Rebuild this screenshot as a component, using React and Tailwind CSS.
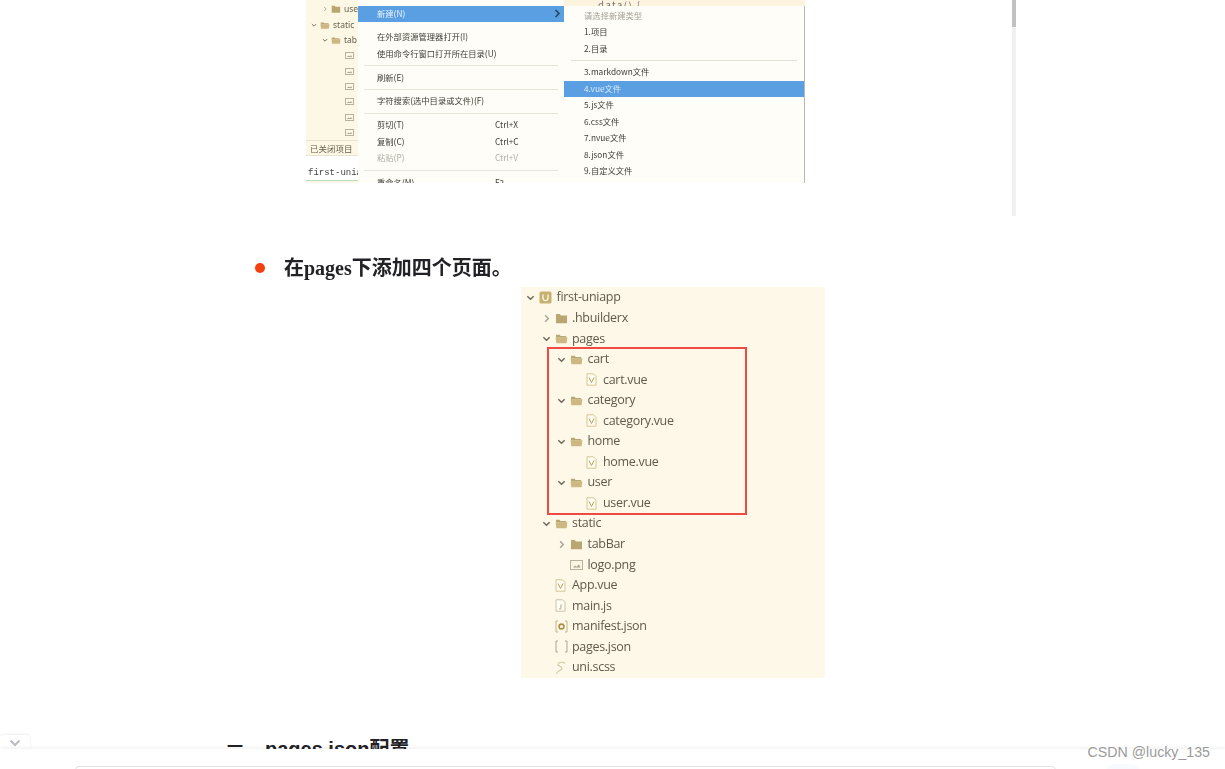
import React from "react";

const Caret = ({ open, className = "" }) => (
  <svg width="9" height="9" viewBox="0 0 10 10" className={className} fill="none" stroke={open ? "#6f6a5c" : "#a8a494"} strokeWidth="1.6">
    {open ? <path d="M1.5 3.5 L5 7 L8.5 3.5" /> : <path d="M3.5 1.5 L7 5 L3.5 8.5" />}
  </svg>
);

const Folder = ({ open, size = 13 }) => (
  <svg width={size} height={size * 0.85} viewBox="0 0 14 12">
    {open ? (
      <>
        <path d="M1 2h4l1 1.2h6V5H1z" fill="#b7a775" />
        <path d="M0.6 4.5h12.8L12.5 11H1.4z" fill="#cdb882" />
      </>
    ) : (
      <path d="M1 1h4.2l1.2 1.6H13V11H1z" fill="#b9a673" />
    )}
  </svg>
);

const FileBase = ({ children, stroke = "#d8c48e" }) => (
  <svg width="11" height="13" viewBox="0 0 11 13" fill="none">
    <path d="M1 .8h6.5L10 3.3v8.9H1z" stroke={stroke} strokeWidth="1" fill="#fffdf4" />
    {children}
  </svg>
);

const TreeIcon = ({ kind }) => {
  if (kind === "project")
    return (
      <svg width="13" height="13" viewBox="0 0 13 13">
        <rect x="0.5" y="0.5" width="12" height="12" rx="1.5" fill="#c8b071" />
        <path d="M4 3.5v3.6a2.5 2.5 0 0 0 5 0V3.5" stroke="#fdf6e3" strokeWidth="1.3" fill="none" />
      </svg>
    );
  if (kind === "open") return <Folder open />;
  if (kind === "closed") return <Folder />;
  if (kind === "vue")
    return (
      <FileBase>
        <path d="M3 4.5l2.5 5 2.5-5" stroke="#b9a15f" strokeWidth="1" />
      </FileBase>
    );
  if (kind === "js")
    return (
      <FileBase stroke="#c9c2aa">
        <path d="M6 5.5v3.6c0 1-1.4 1.1-2 .4" stroke="#a59f89" strokeWidth="1" />
      </FileBase>
    );
  if (kind === "image")
    return (
      <svg width="13" height="10" viewBox="0 0 13 10" fill="none">
        <rect x="0.5" y="0.5" width="12" height="9" stroke="#b8b29c" fill="#fbf5e2" />
        <path d="M3 7.5l2-2 1.5 1.2L9 4.5l1.5 3z" fill="#aaa48c" />
      </svg>
    );
  if (kind === "manifest")
    return (
      <svg width="13" height="13" viewBox="0 0 13 13" fill="none">
        <path d="M3 1H1v11h2M10 1h2v11h-2" stroke="#c7b27c" />
        <circle cx="6.5" cy="6.5" r="2.4" stroke="#ab8f4c" strokeWidth="1.6" />
      </svg>
    );
  if (kind === "bracket")
    return (
      <svg width="13" height="13" viewBox="0 0 13 13" fill="none">
        <path d="M3 1H1v11h2M10 1h2v11h-2" stroke="#a9a695" />
      </svg>
    );
  return (
    <svg width="11" height="14" viewBox="0 0 11 14" fill="none" stroke="#cfc69f" strokeWidth="1.1">
      <path d="M10 2.5C8 .5 3.500 1 3 3.500c-.4 2 4.500 1.500 4 4C6.500 10 2 9 1.500 13" />
    </svg>
  );
};

const treeRows = [
  [0, "open", "project", "first-uniapp"],
  [1, "closed", "closed", ".hbuilderx"],
  [1, "open", "open", "pages"],
  [2, "open", "open", "cart"],
  [3, null, "vue", "cart.vue"],
  [2, "open", "open", "category"],
  [3, null, "vue", "category.vue"],
  [2, "open", "open", "home"],
  [3, null, "vue", "home.vue"],
  [2, "open", "open", "user"],
  [3, null, "vue", "user.vue"],
  [1, "open", "open", "static"],
  [2, "closed", "closed", "tabBar"],
  [2, null, "image", "logo.png"],
  [1, null, "vue", "App.vue"],
  [1, null, "js", "main.js"],
  [1, null, "manifest", "manifest.json"],
  [1, null, "bracket", "pages.json"],
  [1, null, "sass", "uni.scss"],
];

const FileTree = () => (
  <div className="relative w-[304px] h-[391px] pt-[0.4px] bg-[#fef8e8] text-[12.5px] text-[#5e5a4c] [font-family:'Open_Sans',sans-serif] blur-[0.35px]">
    {treeRows.map(([depth, caret, icon, label], i) => (
      <div key={i} className="flex h-[20.56px] items-center leading-none">
        <div className={depth === 0 ? "w-[5px]" : depth === 1 ? "w-[20.5px]" : depth === 2 ? "w-[36px]" : "w-[51.5px]"} />
        <div className="w-[13px] flex items-center">{caret && <Caret open={caret === "open"} />}</div>
        <div className="w-[17.5px] flex items-center">
          <TreeIcon kind={icon} />
        </div>
        <span className="tracking-[-0.3px]">{label}</span>
      </div>
    ))}
    <div className="absolute left-[26px] top-[60px] w-[200px] h-[168px] border-2 border-[#ee4a44]" />
  </div>
);

const menuFont = "text-[8.3px] leading-none text-[#3f3d36] [font-family:'Noto_Sans_CJK_SC',sans-serif]";

const Divider = ({ cls }) => <div className={"h-px bg-[#e8e5da] " + cls} />;

const Row = ({ h, label, shortcut, cls = "" }) => (
  <div className={"flex items-center pl-[19px] " + cls} style={{ height: h }}>
    <span className="w-[118px]">{label}</span>
    {shortcut && <span>{shortcut}</span>}
  </div>
);

const sideRows = [
  ["closed", "use", 1],
  ["open", "static", 0],
  ["open", "tab", 1],
];

const TopShot = () => (
  <div className="flex w-[499px] h-[183px] overflow-hidden blur-[0.35px] bg-[#fffdf6]">
    <div className="w-[52px] shrink-0 bg-[#fdf7e6] overflow-hidden whitespace-nowrap text-[8.5px] leading-none text-[#66624f] [font-family:'Noto_Sans',sans-serif]">
      <div className="h-[1.5px]" />
      {sideRows.map(([c, t, d]) => (
        <div key={t} className={"flex items-center gap-[3px] h-[15.5px] " + (d ? "pl-[16px]" : "pl-[5px]")}>
          <Caret open={c === "open"} className="w-[6px] h-[6px] shrink-0" />
          <Folder open={c === "open"} size={10} />
          <span>{t}</span>
        </div>
      ))}
      {[0, 1, 2, 3, 4, 5].map((i) => (
        <div key={i} className="flex items-center h-[15.4px] pl-[39px]">
          <svg width="9" height="7" viewBox="0 0 9 7" fill="none">
            <rect x=".5" y=".5" width="8" height="6" stroke="#b8b29c" />
            <path d="M2 5l1.500-1.500L5 4.500 6 3l1 2z" fill="#a8a28a" />
          </svg>
        </div>
      ))}
      <div className="h-[16px] flex items-center pl-[4px] border-y border-[#e8e3d0] [font-family:'Noto_Sans_CJK_SC',sans-serif]">已关闭项目</div>
      <div className="h-[13px] bg-white" />
      <div className="h-[12px] pl-[2px] bg-white border-b border-[#bcd9bc] [font-family:'Liberation_Mono',monospace] text-[9px] text-[#444]">first-unia</div>
    </div>

    <div className={"w-[206px] shrink-0 bg-[#fffdf7] " + menuFont}>
      <div className="h-[6px]" />
      <div className="flex items-center justify-between h-[16px] pb-[1px] bg-[#5b9fe3] pl-[19px] pr-[3px] text-[#e8f2fb]">
        <span>新建(N)</span>
        <svg width="7" height="9" viewBox="0 0 7 9" fill="none" stroke="#26425f" strokeWidth="1.500">
          <path d="M1.500 1l3.500 3.500L1.500 8" />
        </svg>
      </div>
      <div className="h-[6px]" />
      <Row h="16.500px" label="在外部资源管理器打开(I)" cls="whitespace-nowrap [&>span]:w-auto" />
      <Row h="16.500px" label="使用命令行窗口打开所在目录(U)" cls="whitespace-nowrap [&>span]:w-auto" />
      <Divider cls="mx-[6px] mt-[4px]" />
      <Row h="23px" label="刷新(E)" />
      <Divider cls="mx-[6px]" />
      <Row h="23px" label="字符搜索(选中目录或文件)(F)" cls="whitespace-nowrap [&>span]:w-auto pb-[2px]" />
      <Divider cls="mx-[6px]" />
      <div className="h-[2px]" />
      <Row h="16.500px" label="剪切(T)" shortcut="Ctrl+X" />
      <Row h="16.500px" label="复制(C)" shortcut="Ctrl+C" />
      <Row h="16.500px" label="粘贴(P)" shortcut="Ctrl+V" cls="text-[#b0aea6]" />
      <Divider cls="mx-[6px] mt-[4px]" />
      <Row h="21px" label="重命名(M)" shortcut="F2" cls="pt-[3px]" />
    </div>

    <div className={"flex-1 flex flex-col " + menuFont}>
      <div className="h-[6px] shrink-0 bg-[#fdf4e0] pl-[34px] text-[9.500px] tracking-[1.500px] text-[#777] overflow-hidden leading-[10px] whitespace-nowrap">data() {"{"}</div>
      <div className="flex-1 bg-[#fffdf7] border-r-[1.5px] border-[#b9b9b4] pt-[1.500px]">
        <div className="h-[16.500px] flex items-center pl-[20px] pb-[1.500px] text-[#a3a198]">请选择新建类型</div>
        <div className="h-[16.500px] flex items-center pl-[20px] pb-[1.500px]">1.项目</div>
        <div className="h-[16.500px] flex items-center pl-[20px] pb-[1.500px]">2.目录</div>
        <div className="h-px mt-[3px] mb-[3px] mx-[7px] bg-[#e4e1d6]" />
        {["3.markdown文件", "4.vue文件", "5.js文件", "6.css文件", "7.nvue文件", "8.json文件", "9.自定义文件"].map((t) => (
          <div key={t} className={"h-[16.500px] flex items-center pl-[20px] pb-[1.500px] " + (t.startsWith("4") ? "bg-[#5b9fe3] text-[#d9e9f8]" : "")}>
            {t}
          </div>
        ))}
      </div>
    </div>
  </div>
);

export default function App() {
  return (
    <div className="relative w-[1225px] h-[769px] overflow-hidden bg-white">
      <div className="relative h-[216px] pl-[306px]">
        <TopShot />
        <div className="absolute left-[1012px] top-0 w-[4px] h-[216px] bg-[#f1f1f1]">
          <div className="h-[27px] bg-[#c1c1c1]" />
        </div>
      </div>

      <div className="flex items-center h-[71px] pt-[33px] pl-[255px] text-[20px] leading-none text-[#222226] [font-family:'Liberation_Serif','Noto_Sans_CJK_SC',serif] font-bold">
        <span className="w-[10px] h-[10px] rounded-full bg-[#f2400f] mr-[19px]" />
        <span className="blur-[0.3px]">在pages下添加四个页面。</span>
      </div>

      <div className="pl-[521px]">
        <FileTree />
      </div>

      <div className="flex items-center pl-[227px] mt-[57px] h-[28px] text-[20px] leading-none font-bold text-[#222226] [font-family:'Liberation_Sans','Noto_Sans_CJK_SC',sans-serif]">
        <span className="w-[38px] text-[16px] pb-[5px]">一</span>
        <span>pages.json配置</span>
      </div>

      <div className="absolute left-0 top-[735px] w-[30px] h-[16px] flex items-center justify-center rounded-t-[4px] bg-white shadow-[0_-1px_3px_rgba(0,0,0,0.07)]">
        <svg width="12" height="8" viewBox="0 0 12 8" fill="none" stroke="#b9bdc4" strokeWidth="2">
          <path d="M1.500 1.500L6 6l4.500-4.500" />
        </svg>
      </div>

      <div className="absolute left-0 right-0 top-[749px] h-[20px] bg-white shadow-[0_-1px_4px_rgba(0,0,0,0.07)]">
        <div className="absolute left-[75px] top-[17px] w-[981px] h-[20px] rounded-[4px] border border-[#e3e3e6] bg-white" />
        <div className="absolute left-[1105px] top-[15px] w-[36px] h-[10px] rounded-t-full bg-[#f7faff]" />
      </div>

      <div className="absolute right-[15px] top-[743px] text-[14.200px] leading-[18px] text-[#9a9a9a] [font-family:'Liberation_Sans',sans-serif] [text-shadow:0_0_2px_#fff]">
        CSDN @lucky_135
      </div>
    </div>
  );
}
